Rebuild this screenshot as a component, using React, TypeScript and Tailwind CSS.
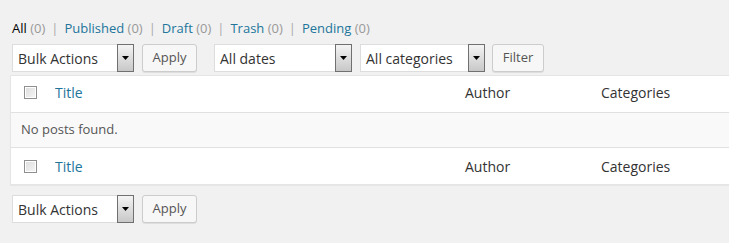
const font = { fontFamily: '"Open Sans", "Noto Sans", sans-serif' };

function Select({ label, width }: { label: string; width: string }) {
  return (
    <div className={`flex h-[28px] ${width} items-stretch border border-[#dddddd] bg-white`}>
      <span className="flex flex-1 items-center pl-[5px] text-[14px] text-[#333333]">{label}</span>
      <span className="my-[-1px] mr-[-1px] flex w-[17px] items-center justify-center border border-[#707070] bg-gradient-to-b from-[#f4f4f4] to-[#c8c8c8]">
        <svg width="7" height="4" viewBox="0 0 7 4">
          <path d="M0 0h7L3.5 4z" fill="#000" />
        </svg>
      </span>
    </div>
  );
}

function Button({ label, width }: { label: string; width: string }) {
  return (
    <button
      type="button"
      className={`h-[28px] ${width} rounded-[3px] border border-[#cccccc] bg-[#f7f7f7] text-[13px] text-[#555555] shadow-[0_1px_0_rgba(0,0,0,0.08)]`}
    >
      {label}
    </button>
  );
}

function Checkbox() {
  return (
    <span className="block h-[13px] w-[13px] border border-[#8f8f8f] bg-gradient-to-br from-[#dcdcdc] to-[#f7f7f7] shadow-[inset_0_0_0_1px_#ffffff]" />
  );
}

function HeaderRow({ top }: { top?: boolean }) {
  return (
    <div className={`flex h-[36px] items-center text-[14px] ${top ? "pb-[4px]" : ""}`}>
      <div className="w-[44px] pl-[13px]">
        <Checkbox />
      </div>
      <a className="w-[410px] text-[#21759b]">Title</a>
      <span className="w-[136px] text-[#333333]">Author</span>
      <span className="text-[#333333]">Categories</span>
    </div>
  );
}

export default function App() {
  return (
    <div className="h-[243px] w-[729px] overflow-hidden bg-[#f1f1f1]" style={font}>
      <div className="flex items-center gap-[6px] pl-[12px] pt-[18px] text-[13px] leading-[20px]">
        <span className="text-[#000000]">
          All <span className="text-[#999999]">(0)</span>
        </span>
        <span className="text-[#aaaaaa]">|</span>
        <span className="text-[#21759b]">
          Published <span className="text-[#999999]">(0)</span>
        </span>
        <span className="text-[#aaaaaa]">|</span>
        <span className="text-[#21759b]">
          Draft <span className="text-[#999999]">(0)</span>
        </span>
        <span className="text-[#aaaaaa]">|</span>
        <span className="text-[#21759b]">
          Trash <span className="text-[#999999]">(0)</span>
        </span>
        <span className="text-[#aaaaaa]">|</span>
        <span className="text-[#21759b]">
          Pending <span className="text-[#999999]">(0)</span>
        </span>
      </div>

      <div className="mt-[6px] flex items-center pl-[12px]">
        <Select label="Bulk Actions" width="w-[122px]" />
        <div className="ml-[8px]">
          <Button label="Apply" width="w-[55px]" />
        </div>
        <div className="ml-[17px]">
          <Select label="All dates" width="w-[138px]" />
        </div>
        <div className="ml-[8px]">
          <Select label="All categories" width="w-[125px]" />
        </div>
        <div className="ml-[7px]">
          <Button label="Filter" width="w-[52px]" />
        </div>
      </div>

      <div className="ml-[10px] mr-[-10px] mt-[3px] border border-[#e5e5e5] bg-white shadow-[0_1px_1px_rgba(0,0,0,0.04)]">
        <HeaderRow top />
        <div className="flex h-[36px] items-center border-y border-[#e1e1e1] bg-[#f9f9f9] pl-[10px] text-[13px] text-[#555555]">
          No posts found.
        </div>
        <HeaderRow />
      </div>

      <div className="mt-[10px] flex items-center pl-[12px]">
        <Select label="Bulk Actions" width="w-[122px]" />
        <div className="ml-[8px]">
          <Button label="Apply" width="w-[55px]" />
        </div>
      </div>
    </div>
  );
}
